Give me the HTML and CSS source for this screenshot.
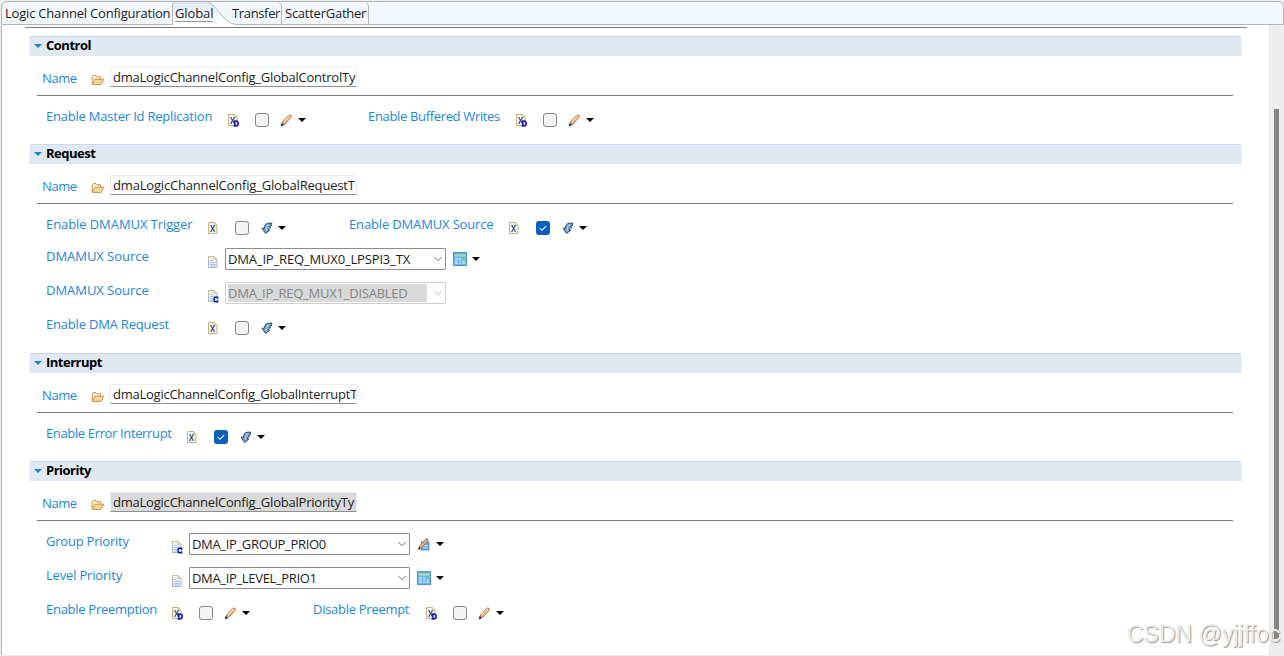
FILE: index.html
```html
<!DOCTYPE html>
<html lang="en">
<head>
<meta charset="utf-8">
<title>Logic Channel Configuration</title>
<link rel="stylesheet" href="styles.css">
</head>
<body>
<svg class="defs" width="0" height="0">
  <symbol id="folder" viewBox="0 0 14 12">
    <path d="M1.2 10V2.6L2.2 1.6H5L6 2.8H9.6V5" fill="#fff3cf" stroke="#c99148"/>
    <path d="M1.4 10.4L4 5.2H12.8L10 10.4Z" fill="#f9d69a" stroke="#c99148"/>
  </symbol>
  <symbol id="page" viewBox="0 0 12 14">
    <path d="M1.5 1.5H7L10 4.5V12.5H1.5Z" fill="#eaf2fc" stroke="#a9b3c4"/>
    <path d="M1.5 5V1.5H7L10 4.5" fill="none" stroke="#d0bd8a"/>
    <path d="M7 1.5V4.5H10" fill="#e8d9a8" stroke="#d0bd8a" stroke-width=".7"/>
    <path d="M3 5.5H6M3 7.5H8.6M3 9.5H8.6M3 11H8.6" stroke="#a3bbdf" stroke-width=".9"/>
  </symbol>
  <symbol id="xpage" viewBox="0 0 12 14">
    <path d="M1.5 1.5H7.4L10 4V12.5H1.5Z" fill="#f5f7fa" stroke="#c9b078"/>
    <path d="M7.2 1.5V4.2H10" fill="#efdca5" stroke="#c9b078" stroke-width=".7"/>
    <path d="M3.9 4.7L7.3 10.3M7.3 4.7L3.9 10.3" stroke="#34506f" stroke-width="1.2"/>
    <path d="M3.1 4.5H4.8M6.5 4.5H8.1M3.1 10.5H4.8M6.5 10.5H8.1" stroke="#34506f" stroke-width=".7"/>
  </symbol>
  <symbol id="badge-d" viewBox="0 0 6 7">
    <path d="M.6 1H2.8C6 1 6 6 2.8 6H.6M1.8 1V6" fill="none" stroke="#1717b5" stroke-width="1.5"/>
  </symbol>
  <symbol id="badge-c" viewBox="0 0 6 7">
    <path d="M4.7 2.7V1.3H2L1.2 2.1V4.9L2 5.7H4.7V4.3" fill="none" stroke="#1717a5" stroke-width="1.4"/>
  </symbol>
  <symbol id="pencil" viewBox="0 0 13 14">
    <path d="M1.8 12.4L2.7 8.8L9 2.2C10 1.2 12 2.8 11.1 4.2L5 10.9Z" fill="#f1b77d" stroke="#996641" stroke-width=".9"/>
    <path d="M4 9L9.8 3" stroke="#ffdcae" stroke-width="1.1"/>
    <path d="M1 13L1.8 10.4L3.6 11.9Z" fill="#23304f" stroke="#23304f" stroke-width=".6"/>
  </symbol>
  <symbol id="bolt" viewBox="0 0 13 14">
    <path d="M12 2.2H8.2C5.6 2.6 4.6 4 4.6 7.2H2L5.6 12.4L9.8 9.2H8.4C8.2 7.8 8.8 7 10.6 6.8L9.6 5.4L12 4.2L10.8 3.4Z" fill="#7aa6cc" stroke="#2a4570" stroke-width="1"/>
    <path d="M9.3 3.6C6.8 4.8 6.4 6.4 6.4 9.6" fill="none" stroke="#c3deef" stroke-width="1"/>
  </symbol>
  <symbol id="calc" viewBox="0 0 14 14">
    <rect x=".5" y=".5" width="13" height="13" fill="#68b4ee" stroke="#4b93d6"/>
    <rect x="1.5" y="2.2" width="11" height="2.4" fill="#a6dca4"/>
    <path d="M1 1H13" stroke="#4d9ce0"/>
    <path d="M2 6.8H5M6 6.8H8.2M2 9H5M6 9H8.2M9.3 9H12M2 11.2H5M6 11.2H8.2M9.3 11.2H12" stroke="#d3ecff" stroke-width="1.2"/>
    <path d="M9 6.8H12.5" stroke="#7fc98a" stroke-width="1.4"/>
  </symbol>
  <symbol id="pencalc" viewBox="0 0 14 14">
    <rect x="4.5" y="5" width="7.5" height="8" fill="#62aee4" stroke="#3e88c4" stroke-width=".8"/>
    <path d="M6 8.5H11M6 10.8H11" stroke="#b9e0fa" stroke-width=".9"/>
    <path d="M1.8 12L3 8.6L9 1.8C10.2 1.2 11.6 2.6 10.9 3.9L4.8 10.5Z" fill="#e8ae79" stroke="#94694a" stroke-width=".8"/>
    <path d="M1 13L2 9.8L4 11.5Z" fill="#23304f"/>
  </symbol>
  <symbol id="tick" viewBox="0 0 14 14">
    <path d="M3.8 7.2L6 9.2L10.2 5" fill="none" stroke="#dbeaff" stroke-width="1.1"/>
  </symbol>
  <symbol id="chev" viewBox="0 0 10 6">
    <path d="M1.3 1L5 4.7L8.7 1" fill="none" stroke="currentColor" stroke-width="1"/>
  </symbol>
</svg>

<div class="editor">
  <nav class="tabs">
    <span class="tab t-logic">Logic Channel Configuration</span>
    <span class="tab t-global"><svg class="curve" width="68" height="24" viewBox="0 0 68 24"><defs><linearGradient id="tabfill" x1="0" y1="0" x2="0" y2="1"><stop offset="0" stop-color="#dfe7f1"/><stop offset="1" stop-color="#fff"/></linearGradient></defs><path d="M.5 24V5Q.5 .5 5 .5H34C44 1 50 22 64 23.5V24Z" fill="url(#tabfill)"/><path d="M.5 24V5Q.5 .5 5 .5H34C44 1 50 22 64 23.5H68" fill="none" stroke="#b4b6b9"/></svg><span class="tabtext">Global</span></span>
    <span class="tab t-transfer">Transfer</span>
    <span class="tab t-scatter">ScatterGather</span>
  </nav>
  <div class="view">
    <main class="form">
      <div class="topline"></div>

      <section class="section control">
        <h2 class="head"><i class="twist"></i><span>Control</span></h2>
        <div class="name"><span class="nlabel">Name</span><svg class="folder"><use href="#folder"/></svg><span class="field"><span class="n1">dmaLogicChannelConfig_GlobalControlTy</span></span></div>
        <div class="rows">
          <div class="row">
            <span class="label"><span class="a1">Enable Master Id Replication</span></span>
            <span class="ctl"><span class="ic"><svg class="doc"><use href="#xpage"/></svg><svg class="badge"><use href="#badge-d"/></svg></span><i class="cb"></i><svg class="act"><use href="#pencil"/></svg><i class="arr"></i></span>
            <span class="label second"><span class="a2">Enable Buffered Writes</span></span>
            <span class="ctl"><span class="ic"><svg class="doc"><use href="#xpage"/></svg><svg class="badge"><use href="#badge-d"/></svg></span><i class="cb"></i><svg class="act"><use href="#pencil"/></svg><i class="arr"></i></span>
          </div>
        </div>
      </section>

      <section class="section request">
        <h2 class="head"><i class="twist"></i><span>Request</span></h2>
        <div class="name"><span class="nlabel">Name</span><svg class="folder"><use href="#folder"/></svg><span class="field"><span class="n2">dmaLogicChannelConfig_GlobalRequestT</span></span></div>
        <div class="rows">
          <div class="row short">
            <span class="label"><span class="a3">Enable DMAMUX Trigger</span></span>
            <span class="ctl"><span class="ic"><svg class="doc"><use href="#xpage"/></svg></span><i class="cb"></i><svg class="act"><use href="#bolt"/></svg><i class="arr"></i></span>
            <span class="label second"><span class="a4">Enable DMAMUX Source</span></span>
            <span class="ctl"><span class="ic"><svg class="doc"><use href="#xpage"/></svg></span><i class="cb on"><svg class="tick"><use href="#tick"/></svg></i><svg class="act"><use href="#bolt"/></svg><i class="arr"></i></span>
          </div>
          <div class="row">
            <span class="label"><span class="a5">DMAMUX Source</span></span>
            <span class="ctl pick"><span class="ic"><svg class="doc"><use href="#page"/></svg></span><span class="select"><span class="val"><span class="s1">DMA_IP_REQ_MUX0_LPSPI3_TX</span></span><svg class="chev"><use href="#chev"/></svg></span><svg class="act"><use href="#calc"/></svg><i class="arr"></i></span>
          </div>
          <div class="row">
            <span class="label"><span class="a5">DMAMUX Source</span></span>
            <span class="ctl pick"><span class="ic"><svg class="doc"><use href="#page"/></svg><svg class="badge"><use href="#badge-c"/></svg></span><span class="select off"><span class="val"><span class="s2">DMA_IP_REQ_MUX1_DISABLED</span></span><svg class="chev"><use href="#chev"/></svg></span></span>
          </div>
          <div class="row">
            <span class="label"><span class="a6">Enable DMA Request</span></span>
            <span class="ctl"><span class="ic"><svg class="doc"><use href="#xpage"/></svg></span><i class="cb"></i><svg class="act"><use href="#bolt"/></svg><i class="arr"></i></span>
          </div>
        </div>
      </section>

      <section class="section interrupt">
        <h2 class="head"><i class="twist"></i><span>Interrupt</span></h2>
        <div class="name"><span class="nlabel">Name</span><svg class="folder"><use href="#folder"/></svg><span class="field"><span class="n3">dmaLogicChannelConfig_GlobalInterruptT</span></span></div>
        <div class="rows">
          <div class="row">
            <span class="label"><span class="a7">Enable Error Interrupt</span></span>
            <span class="ctl"><span class="ic"><svg class="doc"><use href="#xpage"/></svg></span><i class="cb on"><svg class="tick"><use href="#tick"/></svg></i><svg class="act"><use href="#bolt"/></svg><i class="arr"></i></span>
          </div>
        </div>
      </section>

      <section class="section priority">
        <h2 class="head"><i class="twist"></i><span>Priority</span></h2>
        <div class="name"><span class="nlabel">Name</span><svg class="folder"><use href="#folder"/></svg><span class="field grey"><span class="n4">dmaLogicChannelConfig_GlobalPriorityTy</span></span></div>
        <div class="rows">
          <div class="row">
            <span class="label"><span class="a8">Group Priority</span></span>
            <span class="ctl pick"><span class="ic"><svg class="doc"><use href="#page"/></svg><svg class="badge"><use href="#badge-c"/></svg></span><span class="select"><span class="val"><span class="s3">DMA_IP_GROUP_PRIO0</span></span><svg class="chev"><use href="#chev"/></svg></span><svg class="act"><use href="#pencalc"/></svg><i class="arr"></i></span>
          </div>
          <div class="row">
            <span class="label"><span class="a9">Level Priority</span></span>
            <span class="ctl pick"><span class="ic"><svg class="doc"><use href="#page"/></svg></span><span class="select"><span class="val"><span class="s4">DMA_IP_LEVEL_PRIO1</span></span><svg class="chev"><use href="#chev"/></svg></span><svg class="act"><use href="#calc"/></svg><i class="arr"></i></span>
          </div>
          <div class="row">
            <span class="label"><span class="a10">Enable Preemption</span></span>
            <span class="ctl"><span class="ic"><svg class="doc"><use href="#xpage"/></svg><svg class="badge"><use href="#badge-d"/></svg></span><i class="cb"></i><svg class="act"><use href="#pencil"/></svg><i class="arr"></i></span>
            <span class="label second"><span class="a11">Disable Preempt</span></span>
            <span class="ctl"><span class="ic"><svg class="doc"><use href="#xpage"/></svg><svg class="badge"><use href="#badge-d"/></svg></span><i class="cb"></i><svg class="act"><use href="#pencil"/></svg><i class="arr"></i></span>
          </div>
        </div>
      </section>
    </main>
    <div class="scroll"><div class="thumb"></div></div>
  </div>
  <div class="watermark">CSDN @yjjffoc</div>
</div>
</body>
</html>
```
FILE: styles.css
```css
* { box-sizing: border-box; }
body { margin: 0; background: #ececec; font: 13px/18px "Open Sans", "Noto Sans", sans-serif; color: #1c1c1c; }
svg { display: block; flex: none; }
.defs { position: absolute; }
.editor { position: relative; width: 1284px; height: 656px; padding: 1px 0 1px 1px; overflow: hidden; }
.tabs { display: flex; height: 24px; background: #f2f7fe; border: 1px solid #b4b6b9; border-radius: 6px 6px 0 0; white-space: nowrap; }
.tab { flex: none; height: 22px; padding-top: 2px; }
.t-logic { width: 170px; padding-left: 3px; letter-spacing: -.2px; }
.t-global { position: relative; width: 57px; height: 24px; margin-top: -1px; padding: 3px 0 0 3px; letter-spacing: -.1px; }
.curve { position: absolute; left: 0; top: 0; }
.tabtext { position: relative; display: inline-block; height: 18px; border-bottom: 1px solid #999; }
.t-transfer { width: 53px; padding-left: 3px; border-right: 1px solid #b4b6b9; border-radius: 0 5px 0 0; letter-spacing: -.35px; }
.t-scatter { width: 87px; padding-left: 3px; border-right: 1px solid #b4b6b9; border-radius: 0 5px 0 0; letter-spacing: -.25px; }
.view { display: flex; height: 630px; background: #fff; border-left: 1px solid #b8b8b8; }
.form { flex: 1; padding-top: 2px; }
.topline { height: 1px; width: 1222px; margin-left: 23px; background: #808080; }
.section { margin-left: 27px; width: 1213px; }
.control { height: 108px; margin-top: 8px; }
.request { height: 209px; }
.interrupt { height: 108px; }
.head { display: flex; align-items: center; height: 20px; margin: 0; padding: 0 0 2px 4px; background: #e0e8f2; border-top: 1px solid #c9d8eb; border-left: 1px solid #edf3fa; border-right: 1px solid #edf3fa; border-radius: 3px 3px 0 0; font-size: 13px; font-weight: 700; line-height: 17px; letter-spacing: -.5px; color: #000; }
.twist { width: 0; height: 0; margin: 1px 4px 0 0; border: 4px solid transparent; border-top-color: #1683d8; border-bottom: 0; }
.name { display: flex; align-items: flex-start; width: 1196px; height: 40px; margin-left: 8px; padding: 11px 0 0 5px; border-bottom: 1px solid #7d7d7d; }
.nlabel { width: 49px; padding-top: 2px; color: #1c86e0; letter-spacing: -.4px; }
.folder { width: 14px; height: 12px; margin: 7px 5px 0 0; }
.field { width: 247px; height: 20px; padding-left: 2px; border: 1px solid #eee; border-bottom-color: #8f8f8f; white-space: nowrap; overflow: hidden; }
.grey { background: #d9d9d9; }
.n1 { letter-spacing: -.22px; }
.n2 { letter-spacing: -.18px; }
.n3 { letter-spacing: -.25px; }
.n4 { letter-spacing: -.22px; }
.rows { padding: 12px 0 0 17px; }
.row { display: flex; align-items: flex-start; height: 34px; }
.short { height: 32px; }
.label { flex: none; margin-top: -1px; color: #1c86e0; white-space: nowrap; }
.a1 { letter-spacing: -.21px; }
.a2 { letter-spacing: -.34px; }
.a3 { letter-spacing: -.08px; }
.a4 { letter-spacing: -.15px; }
.a5 { letter-spacing: -.04px; }
.a6 { letter-spacing: -.2px; }
.a7 { letter-spacing: -.36px; }
.a8 { letter-spacing: -.22px; }
.a9 { letter-spacing: -.18px; }
.a10 { letter-spacing: -.28px; }
.a11 { letter-spacing: -.28px; }
.s1 { letter-spacing: -.16px; }
.s2 { letter-spacing: -.24px; }
.s3, .s4 { letter-spacing: -.33px; }
.control .label { width: 181px; }
.control .second { width: 147px; margin-left: 61px; }
.request .label { width: 161px; }
.request .second { width: 159px; margin-left: 62px; }
.interrupt .label { width: 140px; }
.priority .label { width: 125px; }
.priority .second { width: 112px; margin-left: 62px; }
.ctl { display: flex; flex: none; width: 80px; padding-top: 5px; }
.ic { position: relative; width: 12px; height: 14px; flex: none; }
.doc { width: 12px; height: 14px; }
.badge { position: absolute; left: 6px; top: 7px; width: 6px; height: 7px; }
.cb { flex: none; width: 14px; height: 14px; margin-left: 16px; border: 1px solid #858585; border-radius: 3px; background: #f5f5f5; }
.on { background: #0a5fb8; border: 0; }
.tick { width: 14px; height: 14px; }
.act { width: 13px; height: 14px; margin-left: 11px; }
.arr { width: 0; height: 0; margin: 5px 0 0 5px; border: 4px solid transparent; border-top-color: #000; border-bottom: 0; }
.pick { width: auto; padding-top: 0; }
.pick .ic { margin-top: 7px; }
.select { display: flex; align-items: center; width: 221px; height: 22px; margin-left: 6px; padding: 0 3px 0 2px; border: 1px solid #8c8c8c; border-radius: 1px; background: #fff; }
.val { flex: none; width: 202px; height: 18px; white-space: nowrap; }
.off { border-color: #cfcfcf; color: #858585; }
.off .val { background: #d9d9d9; width: 199px; margin-right: 3px; }
.chev { width: 10px; height: 6px; margin-left: 3px; color: #707070; }
.off .chev { color: #bbb; }
.pick .act { width: 14px; margin: 4px 0 0 7px; }
.pick .arr { margin: 9px 0 0 5px; }
.scroll { flex: none; width: 15px; padding: 84px 0 0 5px; background: #eee; }
.thumb { width: 5px; height: 530px; background: #858585; }
.watermark { position: absolute; left: 1127px; top: 621px; font: 23px/26px "Liberation Sans", sans-serif; color: #ececec; text-shadow: 1px 1px 1px #999; white-space: nowrap; }
```
